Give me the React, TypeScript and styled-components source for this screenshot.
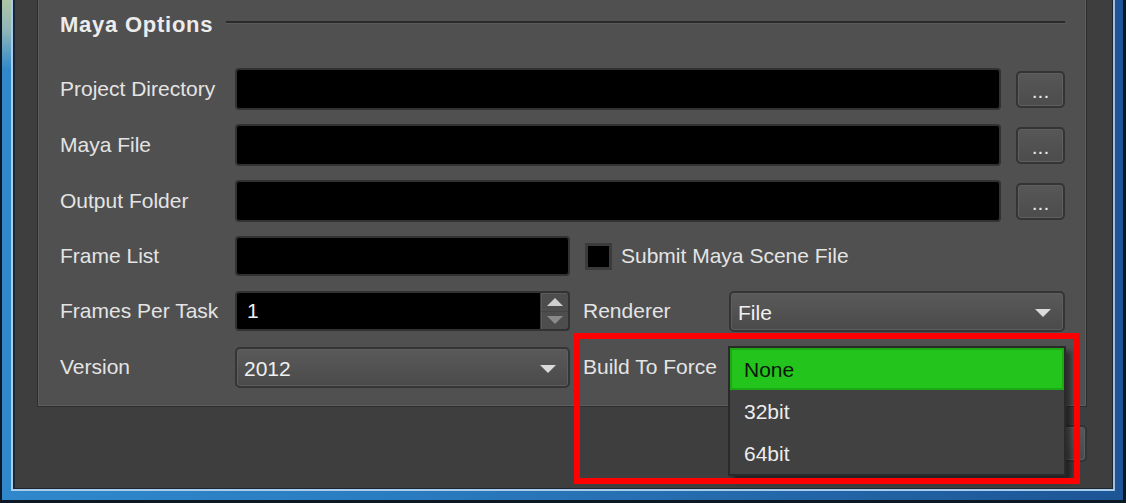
import React from "react";
import styled, { createGlobalStyle } from "styled-components";

const GlobalStyle = createGlobalStyle`
    html, body {
        margin: 0;
        padding: 0;
        background: #3e3e3e;
    }
    * {
        box-sizing: border-box;
    }
`;

const FONT = `"Liberation Sans", Arial, sans-serif`;

const Window = styled.div`
    position: relative;
    width: 1126px;
    height: 503px;
    display: flex;
    border-left: 2px solid #0c1824;
    border-right: 3px solid #0c1824;
    border-bottom: 3px solid #0c1824;
    padding: 0 8px 9px 9px;
    background:
        linear-gradient(180deg, #aec6a4 0, #8fb6b8 30px, rgba(47, 136, 203, 0) 70px) left top / 11px 80px no-repeat,
        linear-gradient(90deg, #2f88cb 0%, #2a7cc0 35%, #1d5595 100%);
    font-family: ${FONT};
`;

const Client = styled.div`
    flex: 1;
    display: flex;
    flex-direction: column;
    border: 2px solid #a9cbec;
    border-top: none;
    border-right-color: #a2bfe2;
    box-shadow: inset 2px 0 0 #1c2631, inset -1px 0 0 #1c2631, inset 0 -1px 0 #1c2631;
    background: #3e3e3e;
    padding: 0 26px 27px 24px;
`;

const Group = styled.div`
    background: #505050;
    border: 1px solid #2e2e2e;
    border-top: none;
    box-shadow: inset 1px 0 0 #5d5d5d, inset -1px 0 0 #5d5d5d, inset 0 -1px 0 #5d5d5d;
    padding: 12px 21px 18px 22px;
`;

const Header = styled.div`
    display: flex;
    align-items: center;
    height: 26px;
`;

const Title = styled.div`
    font-size: 22px;
    font-weight: 700;
    letter-spacing: 0.75px;
    line-height: 26px;
    color: #ececec;
    white-space: nowrap;
`;

const TitleRule = styled.div`
    flex: 1;
    margin: -5px 0 0 13px;
    height: 3px;
    border-top: 2px solid #2a2a2a;
    border-bottom: 1px solid #5b5b5b;
`;

const Form = styled.div`
    display: flex;
    flex-direction: column;
    gap: 14px;
    margin-top: 30px;
`;

const Row = styled.div<{ $height?: number }>`
    display: grid;
    grid-template-columns: 175px 1fr;
    align-items: center;
    height: ${({ $height }) => `${$height ?? 42}px`};
`;

const Label = styled.div<{ $indent?: number }>`
    font-size: 21px;
    color: #e4e4e4;
    white-space: nowrap;
    padding-left: ${({ $indent }) => `${$indent ?? 0}px`};
`;

const PathField = styled.div`
    display: grid;
    grid-template-columns: 1fr 49px;
    gap: 15px;
    align-items: center;
    height: 100%;
`;

const SplitField = styled.div`
    display: grid;
    grid-template-columns: 335px 159px 1fr;
    align-items: center;
    height: 100%;
`;

const TextBox = styled.input<{ $height?: number }>`
    width: 100%;
    height: ${({ $height }) => `${$height ?? 42}px`};
    margin: 0;
    padding: 0 10px;
    background: #000;
    border: 2px solid #323232;
    border-radius: 4px;
    outline: none;
    font-family: ${FONT};
    font-size: 21px;
    color: #f0f0f0;
`;

const BrowseButton = styled.div`
    height: 37px;
    display: flex;
    align-items: center;
    justify-content: center;
    padding-top: 3px;
    border: 2px solid #343434;
    border-radius: 5px;
    background: linear-gradient(180deg, #575757 0%, #4c4c4c 100%);
    box-shadow: inset 0 0 0 1px #5f5f5f;
    font-size: 21px;
    color: #e8e8e8;
`;

const CheckRow = styled.div`
    grid-column: 2 / 4;
    display: flex;
    align-items: center;
    gap: 9px;
    padding-left: 15px;
`;

const CheckBox = styled.div`
    width: 27px;
    height: 27px;
    background: #000;
    border: 3px solid #3b3b3b;
`;

const SpinBox = styled.div`
    display: grid;
    grid-template-columns: 1fr 28px;
    height: 40px;
    background: #000;
    border: 2px solid #323232;
    border-radius: 4px;
    overflow: hidden;
`;

const SpinValue = styled.div`
    display: flex;
    align-items: center;
    padding-left: 10px;
    font-size: 21px;
    color: #f0f0f0;
`;

const SpinButtons = styled.div`
    display: flex;
    flex-direction: column;
    background: #4d4d4d;
    border-left: 1px solid #3a3a3a;
    box-shadow: inset 1px 1px 0 #5c5c5c;
`;

const SpinHalf = styled.div`
    flex: 1;
    display: flex;
    align-items: center;
    justify-content: center;
    & + & {
        border-top: 1px solid #444;
    }
`;

const Triangle = styled.span<{ $up?: boolean; $color: string; $size: number }>`
    width: 0;
    height: 0;
    border-left: ${({ $size }) => `${$size}px`} solid transparent;
    border-right: ${({ $size }) => `${$size}px`} solid transparent;
    ${({ $up, $color, $size }) =>
        $up
            ? `border-bottom: ${Math.round($size * 0.95)}px solid ${$color};`
            : `border-top: ${Math.round($size * 0.95)}px solid ${$color};`}
`;

const ComboWrap = styled.div`
    position: relative;
`;

const Combo = styled.div`
    display: flex;
    align-items: center;
    justify-content: space-between;
    height: 41px;
    padding: 3px 12px 0 7px;
    border: 2px solid #353535;
    border-radius: 5px;
    background: linear-gradient(180deg, #5a5a5a 0%, #4a4a4a 100%);
    box-shadow: inset 0 0 0 1px #5e5e5e;
    font-size: 21px;
    color: #f0f0f0;
`;

const Popup = styled.div`
    position: absolute;
    top: -1px;
    left: -1px;
    right: -1px;
    z-index: 2;
    background: #414141;
    border: 2px solid #2a2a2a;
    box-shadow: 5px 5px 5px rgba(0, 0, 0, 0.45);
`;

const PopupItem = styled.div<{ $selected?: boolean }>`
    height: 42px;
    display: flex;
    align-items: center;
    padding: 2px 0 0 ${({ $selected }) => ($selected ? "12px" : "14px")};
    font-size: 21px;
    color: ${({ $selected }) => ($selected ? "#0b160b" : "#ececec")};
    background: ${({ $selected }) => ($selected ? "#23c41c" : "transparent")};
    border: ${({ $selected }) => ($selected ? "2px solid #1ca915" : "none")};
`;

const ButtonRow = styled.div`
    display: flex;
    justify-content: flex-end;
    margin-top: 18px;
`;

const DialogButton = styled.div`
    width: 140px;
    height: 37px;
    display: flex;
    align-items: center;
    justify-content: center;
    border: 2px solid #343434;
    border-radius: 5px;
    background: linear-gradient(180deg, #575757 0%, #4a4a4a 100%);
    box-shadow: inset 0 0 0 1px #5e5e5e;
    font-size: 21px;
    color: #e8e8e8;
`;

const Highlight = styled.div`
    position: absolute;
    left: 572px;
    top: 333px;
    width: 506px;
    height: 151px;
    border: 6px solid #ff0000;
    pointer-events: none;
    z-index: 3;
`;

const ComboArrow = () => <Triangle $color="#dadada" $size={8} />;

const pathRows = ["Project Directory", "Maya File", "Output Folder"];

const App: React.FC = () => {
    return (
        <>
            <GlobalStyle />
            <Window>
                <Client>
                    <Group>
                        <Header>
                            <Title>Maya Options</Title>
                            <TitleRule />
                        </Header>
                        <Form>
                            {pathRows.map((label) => (
                                <Row key={label}>
                                    <Label>{label}</Label>
                                    <PathField>
                                        <TextBox readOnly defaultValue="" />
                                        <BrowseButton>...</BrowseButton>
                                    </PathField>
                                </Row>
                            ))}
                            <Row $height={40}>
                                <Label>Frame List</Label>
                                <SplitField>
                                    <TextBox readOnly defaultValue="" $height={40} />
                                    <CheckRow>
                                        <CheckBox />
                                        <Label>Submit Maya Scene File</Label>
                                    </CheckRow>
                                </SplitField>
                            </Row>
                            <Row>
                                <Label>Frames Per Task</Label>
                                <SplitField>
                                    <SpinBox>
                                        <SpinValue>1</SpinValue>
                                        <SpinButtons>
                                            <SpinHalf>
                                                <Triangle $up $color="#cfcfcf" $size={8} />
                                            </SpinHalf>
                                            <SpinHalf>
                                                <Triangle $color="#8a8a8a" $size={8} />
                                            </SpinHalf>
                                        </SpinButtons>
                                    </SpinBox>
                                    <Label $indent={13}>Renderer</Label>
                                    <Combo>
                                        <span>File</span>
                                        <ComboArrow />
                                    </Combo>
                                </SplitField>
                            </Row>
                            <Row>
                                <Label>Version</Label>
                                <SplitField>
                                    <Combo>
                                        <span>2012</span>
                                        <ComboArrow />
                                    </Combo>
                                    <Label $indent={13}>Build To Force</Label>
                                    <ComboWrap>
                                        {/* open combo: its own face sits under the list */}
                                        <Combo>
                                            <span />
                                            <ComboArrow />
                                        </Combo>
                                        <Popup>
                                            <PopupItem $selected>None</PopupItem>
                                            <PopupItem>32bit</PopupItem>
                                            <PopupItem>64bit</PopupItem>
                                        </Popup>
                                    </ComboWrap>
                                </SplitField>
                            </Row>
                        </Form>
                    </Group>
                    <ButtonRow>
                        <DialogButton>Submit</DialogButton>
                    </ButtonRow>
                </Client>
                <Highlight />
            </Window>
        </>
    );
};

export default App;
